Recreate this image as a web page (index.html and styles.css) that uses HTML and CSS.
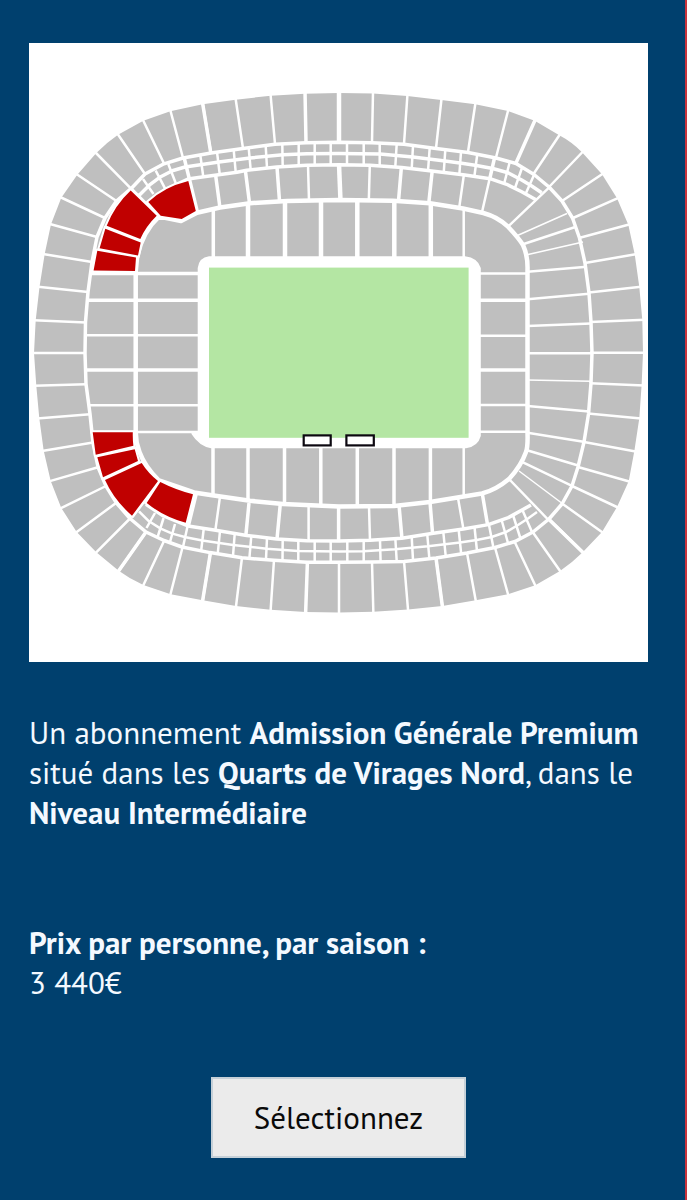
FILE: index.html
```html
<!DOCTYPE html>
<html lang="fr">
<head>
    <meta charset="UTF-8">
    <meta name="viewport" content="width=device-width, initial-scale=1.0">
    <title>Admission Générale Premium</title>
    <link rel="stylesheet" href="styles.css">
</head>
<body>
    <main class="offer">
        <svg class="stadium" viewBox="29 43 619 619" role="img" aria-label="Plan du stade">
            <!-- bowl -->
            <path class="seats" d="M34 353 L35.7 320.3 L39.5 287 L44.7 254 L51 224.3 L61.3 197.7 L77.3 174.7 L96.3 153 Q106 143 118 134.7 L143.3 120.7 L170.3 111.3 L202.7 104.3 L235.7 99.7 L270.7 95.7 L305 93.7 L339 93 L373 93.5 L407.3 96 L441.3 100 L475.3 104.3 L508 111 L534.7 120.7 L559.3 135.3 Q572 142 582 152.3 L602 174.3 L617 198.3 L628.3 224.7 L634.7 254.3 L639.3 287 L642.3 320 L643 352.7 L641.6 385.3 L639.3 418.3 L634.3 451.3 L628.7 481.3 L617 507 L602 532 L582.7 552.3 Q572 563 560 571 L535.3 585.3 L508 594.3 L475.7 600.3 L442.3 606 L408 609.5 L373.3 611.7 L339 612.5 L305.7 612 L270.7 609.7 L236 606 L202.7 600.3 L170.7 594.3 L143.3 585 Q130 579 118.7 570.7 L96.3 552.3 L76.7 532 L61.3 508 L50.7 481 L43.7 450.7 L39.3 418.3 L36.3 385.7 Z"/>

            <!-- upper tier: inner edge, then the aisles -->
            <path class="gap w3" d="M85 353 L85.5 322 L88 292 L92 262 L97 237 L105 218 L116.5 201 L131 188.7 L145 174 L164 163.8 L183 158 L211 153 L243 148.5 L275 144.3 L306 142.7 L339 142.3 L372 142.8 L404 144.3 L436 148.5 L468 152.5 L496 158 L516 163.5 L534 174.5 L549 187 L562 201 L572.5 218 L579.5 238 L585 263 L589 293 L591 322 L592 353 L591 383 L588.5 414 L584 442 L578 467 L572 486 L562 504 L549 519 L533 532 L515 541.5 L495 547.5 L467 553 L436 558 L404 561.5 L372 562 L339 562.3 L307 562.3 L274 560.3 L242 557.8 L210 552.6 L182 547 L164 540.5 L146 532 L130 518.5 L116.5 503 L106 486 L98 467 L93 443 L90 414 L86 384 Z"/>
            <path class="gap w2" d="M38 286.7 L88 292 M43 254 L92 262 M49 223.8 L97 237 M60 197 L105 218 M76 173.8 L116.5 201 M95 152 L131 188.7 M117 133 L145 174 M142 118 L164 163.5 M170 109 L183 158 M202.5 102 L211 153 M235.5 98 L243 148.5 M270.5 94 L275 144 M373 92 L372 142 M407.5 94 L404 144 M441.6 98 L436 148.5 M475.6 102 L468 152 M508.5 109 L496 157.5 M560.5 133.5 L533.5 174 M583.5 151 L549 187 M603.5 173.3 L562 201 M619 197.6 L573 218 M630 224.2 L579 238 M637 254 L585 263 M641 286.8 L589 292.5 M645 319.8 L590 322 M645 352.7 L590 352.7 M644 385.4 L590 383.3 M641 418.5 L588 413.5 M637 451.8 L584 442 M631 482 L578 467 M619 508 L572 486 M604 533.5 L562 503.5 M584.5 554 L549 519 M561.5 573 L533 532.5 M536 587 L514.5 541.5 M508.5 596 L495 547.5 M476 602 L467 553 M442.6 608 L436 558 M408.2 612 L404 561 M373.4 614 L372 562 M339 615 L339 562 M270.5 612 L274 560 M235.8 608 L242 557.5 M202.5 602 L210.4 553 M170 596 L182.5 547.5 M142.5 587 L164 541 M117.5 572.5 L146 532 M95 553.6 L130 518.5 M75 533.3 L116 503 M60 508.7 L106 486 M49 481.4 L98 467.3 M42 451 L93 442.5 M37 418.5 L90 414.3 M34 385.8 L86 384.3 M32 353 L85 353 M34 320.2 L86 322.4"/>
            <path class="gap w3" d="M305 91 L306 142.5 M536 118 L516 163 M305.6 614 L307.4 562.5 M202.4 102 L210.8 153 M202.4 602 L210.4 553 M117.5 572.5 L145.6 532.5 M583 552.6 L549.5 520 M442.6 608 L436 558"/>
            <path class="gap w4" d="M339 91 L339 142"/>

            <!-- boxes, north side -->
            <path class="gap w3" d="M131 201 L140 194.5 L150.3 184.3 L160.7 176.7 L172.3 170.7 L185 167 L202 164.6 L219 162 L250 158 L283 154.8 L307 153.7 L339 153.5 L380 154 L413 157 L445 161 L461.7 163.3 L475 165.3 L492.7 168.5 L508 172.7 L521.7 180 L531.7 186 L541.7 192.7"/>
            <path class="gap w3" d="M148.3 202 L164 190.3 L188 179 L202 177 L237 172.3 L246.7 170.3 L276.7 167 L306.7 165.3 L339 164.8 L370 165.3 L401.7 167.5 L431.7 171 L465 175 L490 178.7 L506.7 184.3 L521.7 191.7 L536 199.8"/>
            <path class="gap w2" d="M143 179 L153.5 194 M155.7 170.7 L165 188.3 M168.3 164 L175.7 183 M200.3 155 L203.3 177 M217 152 L219.7 174 M233.7 150 L235.7 172 M248.7 148 L250.7 170 M265.7 146 L267 168 M282.3 144 L282.7 167 M298.7 143 L298.7 166 M314.7 143 L314.7 165 M330.7 142 L330.7 165 M347 142 L347 165 M363.7 143 L363.7 165 M379.7 143 L379.7 166 M396.7 144 L395.3 167 M413 146 L411.7 169 M429.7 148 L428 171 M445.3 150 L443.7 173 M461 152 L459.3 175 M477.3 154 L474.3 177 M510 161 L504.3 183 M522.3 167 L515 188 M534 175 L526 193"/>
            <path class="gap w3" d="M184.2 158 L189.6 180 L197.6 213 M494.5 158 L489.7 179"/>

            <!-- boxes, south side -->
            <path class="gap w3" d="M146 504.3 L162.3 515.3 L188 526 L215.7 530.3 L246.7 535.5 L276.7 539 L306.7 540.7 L339 541 L370 540.3 L401.7 538.3 L431.7 533.6 L463.3 529 L488.3 524.6 L508.3 517.6 L531 505"/>
            <path class="gap w2" d="M139 511.3 L149 521.3 L160.7 528.6 L172.3 533.6 L185.7 537.3 L202.3 540.5 L233 545 L266.7 548.7 L298 551 L339 551.4 L363 551.3 L395 549.3 L428 546.3 L460 542.5 L476.7 540 L491.7 537 L506.7 531.7 L518 525 L528 518.5 L537 512"/>
            <path class="gap w2" d="M155 513 L146.5 528 M163.6 518 L157.6 537 M175 524 L170 542 M187.6 526 L183 547 M203.7 529 L201 552 M220 531 L217.7 554 M234.7 534 L233 556 M251.3 536 L249.4 558 M267 538 L266 559 M282.7 539 L282.5 561 M298.3 540 L298.3 562 M314.7 541 L314.7 562 M330.7 541 L330.7 562 M347.3 541 L347.3 562 M363.7 541 L363.7 562 M380 540 L380.6 562 M395.3 538 L396.7 561 M411.7 537 L413 560 M427.3 535 L429.4 559 M443.3 532 L445.8 557 M458.7 530 L461.2 554 M474.6 528 L477 551 M489 525 L493.5 548 M501.6 520 L508 543 M513 515 L520.3 538 M522.4 510 L532 532"/>

            <!-- middle tier, straight stands -->
            <path class="gap w3" d="M215.6 175 L220 208 M245.3 170 L249.5 203 M277 167 L279.5 201 M432.2 171 L428.8 203 M401.4 167 L398.5 201 M196.4 493 L188.3 526 M249 503 L245.8 536 M280.2 505 L277 539 M399 505 L402 539 M430 502 L432.6 534 M482 492 L487.6 525 M338.6 506 L338.6 541"/>
            <path class="gap w2" d="M308 165 L309 201 M369.8 165 L368.8 201 M464 174 L459 209 M489.8 178 L481.8 213 M219.8 498 L215.4 530 M308.6 506 L308.6 541 M369 506 L370 541 M458 498 L463.6 530"/>
            <path class="gap w4" d="M339 164 L340.5 201"/>

            <!-- east corners and east stand -->
            <path class="gap w2" d="M508 226.7 L549 187.6 M527.5 271.8 L587 266.7 M527.5 299.2 L589 293.8 M527.5 326 L591 323.6 M527.5 353.2 L591 353.2 M527.5 406 L589 411.4 M527.5 432.7 L585 442 M527 450.3 L579 465.8 M523 462.3 L573 486.3 M509 479 L548 519.5"/>
            <path class="gap w1" d="M518 235.3 L567 213.5 M527 254.8 L583 242 M527.5 380 L591 381.3 M519 471 L563 504"/>
            <path class="gap w2" d="M523 244.2 L576 226.8"/>

            <!-- lower tier -->
            <path class="gap w4" d="M135.7 272 L137 258 Q142 232 159 216.5 L181 221 L197 212.7 L220 207.5 L250 203.2 L287 201 L339 200 L393 200.7 L430 203.3 L463 208.5 L483.3 213 Q498 217 508 226.7 Q518 237 523 245 Q528 256 527.5 270 L527.5 432 Q528 447 526 452 Q521 466 509 479 Q496 490 482 493.5 L430 502 L394 506 L339 506.6 L283 504 L250 500.8 L212 495.3 L194 492.5 L159 480.5 Q145 467 139.5 452 Q135.7 442 135.7 432 Z"/>
            <path class="gap w4" d="M248 204 V258 M285 202 V258 M321 201 V258 M357.3 201 V258 M394.3 201 V258 M430.8 203 V258"/>
            <path class="gap w3" d="M213.3 208 V258 M213 446 V496 M248 446 V501 M284.5 446 V504 M320.8 446 V505 M357.3 446 V505 M394 446 V505 M430.4 446 V502 M86 300.3 H198 M86 370 H198 M480 300.3 H528 M480 370 H528 M90 273.5 H198"/>
            <path class="gap w2" d="M463.7 208 V258 M463.7 446 V496 M86 335.3 H198 M88 405.3 H198 M90 432 H198 M480 273.4 H528 M480 335.7 H528 M480 405 H528 M480 431.8 H528"/>
            <path class="gap w3" d="M131 188.7 L158 216 M159 481 L132 517"/>

            <!-- pitch -->
            <path class="surround" d="M197.7 268 Q199 257.5 209 256.3 H465 Q478 258 480.8 268 V436 Q478 446.5 466 448.3 H211 Q199 446 191.5 434 L191.5 432 H197.7 Z"/>
            <rect class="pitch" x="209" y="267.6" width="259.6" height="170.2"/>
            <rect class="bench" x="303.7" y="435.4" width="27" height="10"/>
            <rect class="bench" x="346.4" y="435.4" width="27.4" height="10"/>

            <!-- selected blocks -->
            <path class="selected" d="M130.7 190.5 L156.7 215.7 Q146 226 140.3 239 L106.7 225.7 Q115 205 130.7 190.5 Z M105.3 228.7 L140.7 242.5 L138 255.5 L99.6 248.3 Z M97.3 250.7 L136 257.6 L135 271 L93.6 270.4 Z M148.3 202 Q164 187 188.3 181 L195.8 211 L181.7 219 L160.7 215.7 Z M92.7 432.3 H132.8 Q132.6 440 133.4 445.8 L95.7 454.7 Z M97.3 457.3 L134.7 449.3 L138 461 L103 477.3 Z M105 480 L141.7 463 Q148 473 158 481 L132 515.7 Q114 500 105 480 Z M160.3 482 Q176 490 193 494.3 L185.7 522.7 Q164 517 146.7 503 Z"/>
        </svg>

        <p class="description">Un abonnement <strong>Admission Générale Premium</strong> situé dans les <strong>Quarts de Virages Nord</strong>, dans le <strong>Niveau Intermédiaire</strong></p>

        <p class="price"><strong>Prix par personne, par saison :</strong><br>3 440€</p>

        <button type="button" class="select-btn">Sélectionnez</button>
    </main>
</body>
</html>
```
FILE: styles.css
```css
* {
    box-sizing: border-box;
}

body {
    margin: 0;
    background-color: #00406e;
    color: #f4f9ff;
    font-family: "PT Sans", Lato, sans-serif;
    font-size: 31px;
    line-height: 40px;
}

.offer {
    display: flex;
    flex-direction: column;
    min-height: 100vh;
    padding: 43px 37px 42px 29px;
    border-right: 2px solid #c8343c;
}

.stadium {
    display: block;
    width: 100%;
    background-color: white;
}

.seats {
    fill: #bfbfbf;
}

.gap {
    fill: none;
    stroke: white;
    stroke-linejoin: round;
}
.w1 {
    stroke-width: 1.5;
}
.w2 {
    stroke-width: 2.5;
}
.w3 {
    stroke-width: 3.5;
}
.w4 {
    stroke-width: 4.5;
}

.surround {
    fill: white;
}

.pitch {
    fill: #b4e6a3;
}

.bench {
    fill: white;
    stroke: #0c0810;
    stroke-width: 2.2;
}

.selected {
    fill: #c00000;
    stroke: white;
    stroke-width: 4;
    paint-order: stroke;
}

.description {
    margin: 51px 0 90px;
}

.price {
    margin: 0 0 74px;
}

.select-btn {
    align-self: center;
    padding: 18px 41px;
    border: 2px solid #c5d0d8;
    background-color: #ebebeb;
    color: #0a0a0a;
    font-family: inherit;
    font-size: 31px;
    line-height: 41px;
    cursor: pointer;
}
```
